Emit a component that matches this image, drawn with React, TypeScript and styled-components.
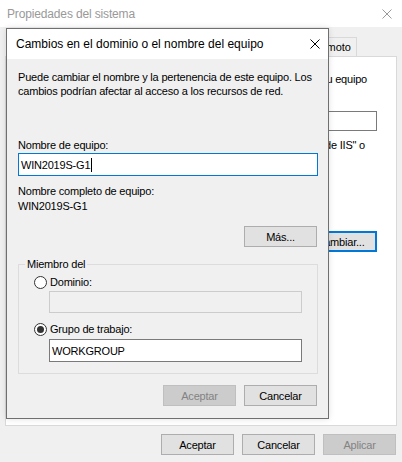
import React from "react";
import styled, { createGlobalStyle, css } from "styled-components";

const GlobalStyle = createGlobalStyle`
  html, body { margin: 0; padding: 0; background: #f0f0f0; }
  body { font-family: "Liberation Sans", Arial, sans-serif; font-size: 11px; color: #000; letter-spacing: -0.2px; }
  * { box-sizing: border-box; }
`;

const Window = styled.div`
  position: relative;
  width: 402px;
  height: 462px;
  background: #f0f0f0;
  display: flex;
  flex-direction: column;
  overflow: hidden;
`;

const TitleBar = styled.div<{ $active?: boolean }>`
  height: ${(p) => (p.$active ? 30 : 27)}px;
  flex: none;
  background: #fff;
  display: flex;
  align-items: center;
  justify-content: space-between;
  padding: ${(p) => (p.$active ? "0 8px 0 9px" : "0 10px 0 7px")};
`;

const TitleText = styled.span<{ $active?: boolean }>`
  font-family: "Liberation Sans", Arial, sans-serif;
  font-size: 12px;
  letter-spacing: ${(p) => (p.$active ? "0" : "-0.15px")};
  color: ${(p) => (p.$active ? "#000" : "#999")};
  white-space: nowrap;
`;

const CloseIcon = ({ color }: { color: string }) => (
  <svg width="10" height="10" viewBox="0 0 10 10" style={{ display: "block" }}>
    <path d="M0.5 0.5 L9.5 9.5 M9.5 0.5 L0.5 9.5" stroke={color} strokeWidth="1" fill="none" />
  </svg>
);

const WindowBody = styled.div`
  flex: 1;
  display: flex;
  flex-direction: column;
  padding: 10px 5px 0 5px;
`;

const TabStrip = styled.div`
  height: 20px;
  display: flex;
  justify-content: flex-end;
  padding-right: 40px;
  margin-bottom: -1px;
`;

const Tab = styled.div`
  height: 20px;
  padding: 0 5px 0 6px;
  border: 1px solid #d9d9d9;
  background: #f0f0f0;
  display: flex;
  align-items: center;
  white-space: nowrap;
  letter-spacing: 0;
`;

const TabPanel = styled.div`
  height: 370px;
  background: #fff;
  border: 1px solid #d9d9d9;
  display: flex;
  flex-direction: column;
  padding: 15px 19px 0 12px;
`;

const PanelText = styled.div<{ $pr: number; $mt?: number }>`
  line-height: 14px;
  white-space: nowrap;
  text-align: right;
  padding-right: ${(p) => p.$pr}px;
  margin-top: ${(p) => p.$mt ?? 0}px;
`;

const DescInput = styled.div`
  margin-top: 25px;
  align-self: flex-end;
  width: 200px;
  height: 20px;
  border: 1px solid #7a7a7a;
  background: #fff;
`;

const Button = styled.div<{ $disabled?: boolean; $focus?: boolean; $mt?: number }>`
  width: 73px;
  height: 21px;
  flex: none;
  display: flex;
  align-items: center;
  justify-content: center;
  background: #e1e1e1;
  border: 1px solid #adadad;
  color: #000;
  white-space: nowrap;
  margin-top: ${(p) => p.$mt ?? 0}px;
  ${(p) =>
    p.$disabled &&
    css`
      background: #cccccc;
      border-color: #bfbfbf;
      color: #838383;
    `}
  ${(p) =>
    p.$focus &&
    css`
      border: 2px solid #0078d7;
    `}
`;

const FocusButtonWrap = styled.div`
  align-self: flex-end;
`;

const Footer = styled.div`
  display: flex;
  justify-content: flex-end;
  gap: 8px;
  margin-top: 8px;
  padding-right: 1px;
`;

const Dialog = styled.div`
  position: absolute;
  left: 6px;
  top: 28px;
  width: 323px;
  height: 391px;
  border: 1px solid #6f6f6f;
  background: #f0f0f0;
  display: flex;
  flex-direction: column;
  box-shadow: 0 0 6px rgba(0, 0, 0, 0.12);
`;

const DialogBody = styled.div`
  flex: 1;
  display: flex;
  flex-direction: column;
  padding: 11px 10px 0 11px;
`;

const Paragraph = styled.p`
  margin: 0;
  line-height: 14px;
  white-space: nowrap;
`;

const Label = styled.div<{ $mt?: number }>`
  line-height: 14px;
  margin-top: ${(p) => p.$mt ?? 0}px;
  white-space: nowrap;
`;

const TextInput = styled.div<{ $variant: "focus" | "normal" | "disabled"; $h?: number; $mt?: number; $indent?: number }>`
  height: ${(p) => p.$h ?? 23}px;
  margin-top: ${(p) => p.$mt ?? 0}px;
  margin-left: ${(p) => p.$indent ?? 0}px;
  display: flex;
  align-items: center;
  padding-left: 2px;
  white-space: nowrap;
  border: 1px solid
    ${(p) => (p.$variant === "focus" ? "#0078d7" : p.$variant === "disabled" ? "#cccccc" : "#7a7a7a")};
  background: ${(p) => (p.$variant === "disabled" ? "#f0f0f0" : "#fff")};
`;

const Caret = styled.span`
  display: inline-block;
  width: 1px;
  height: 14px;
  background: #000;
  margin-left: 1px;
`;

const RightRow = styled.div<{ $mt: number }>`
  display: flex;
  justify-content: flex-end;
  gap: 8px;
  margin-top: ${(p) => p.$mt}px;
  padding-right: 1px;
`;

const GroupBox = styled.fieldset`
  margin: 10px 0 0 0;
  padding: 4px 15px 11px 15px;
  border: 1px solid #dcdcdc;
  display: flex;
  flex-direction: column;
  min-width: 0;
`;

const Legend = styled.legend`
  padding: 0 2px;
  margin-left: -9px;
  line-height: 14px;
`;

const RadioRow = styled.div<{ $mt?: number }>`
  display: flex;
  align-items: center;
  gap: 3px;
  height: 14px;
  margin-top: ${(p) => p.$mt ?? 0}px;
`;

const RadioCircle = styled.span<{ $checked?: boolean }>`
  width: 13px;
  height: 13px;
  border-radius: 50%;
  border: 1px solid #333;
  background: #fff;
  display: flex;
  align-items: center;
  justify-content: center;
  &::after {
    content: "";
    width: 7px;
    height: 7px;
    border-radius: 50%;
    background: ${(p) => (p.$checked ? "#333" : "transparent")};
  }
`;

export default function App() {
  return (
    <>
      <GlobalStyle />
      <Window>
        <TitleBar>
          <TitleText>Propiedades del sistema</TitleText>
          <CloseIcon color="#9a9a9a" />
        </TitleBar>
        <WindowBody>
          <TabStrip>
            <Tab>Acceso remoto</Tab>
          </TabStrip>
          <TabPanel>
            <PanelText $pr={10}>Windows usa la siguiente información para identificar su equipo</PanelText>
            <DescInput />
            <PanelText $pr={12} $mt={7}>
              Por ejemplo: "Servidor de producción de IIS" o
            </PanelText>
            <FocusButtonWrap>
              <Button $focus $mt={79}>Cambiar...</Button>
            </FocusButtonWrap>
          </TabPanel>
          <Footer>
            <Button>Aceptar</Button>
            <Button>Cancelar</Button>
            <Button $disabled>Aplicar</Button>
          </Footer>
        </WindowBody>

        <Dialog>
          <TitleBar $active>
            <TitleText $active>Cambios en el dominio o el nombre del equipo</TitleText>
            <CloseIcon color="#000" />
          </TitleBar>
          <DialogBody>
            <Paragraph>
              Puede cambiar el nombre y la pertenencia de este equipo. Los
              <br />
              cambios podrían afectar al acceso a los recursos de red.
            </Paragraph>
            <Label $mt={40}>Nombre de equipo:</Label>
            <TextInput $variant="focus" $mt={1}>
              WIN2019S-G1
              <Caret />
            </TextInput>
            <Label $mt={8}>Nombre completo de equipo:</Label>
            <Label $mt={1}>WIN2019S-G1</Label>
            <RightRow $mt={13}>
              <Button>Más...</Button>
            </RightRow>
            <GroupBox>
              <Legend>Miembro del</Legend>
              <RadioRow>
                <RadioCircle />
                Dominio:
              </RadioRow>
              <TextInput $variant="disabled" $h={22} $mt={2} $indent={15} />
              <RadioRow $mt={9}>
                <RadioCircle $checked />
                Grupo de trabajo:
              </RadioRow>
              <TextInput $variant="normal" $mt={3} $indent={15}>
                WORKGROUP
              </TextInput>
            </GroupBox>
            <RightRow $mt={11}>
              <Button $disabled>Aceptar</Button>
              <Button>Cancelar</Button>
            </RightRow>
          </DialogBody>
        </Dialog>
      </Window>
    </>
  );
}
